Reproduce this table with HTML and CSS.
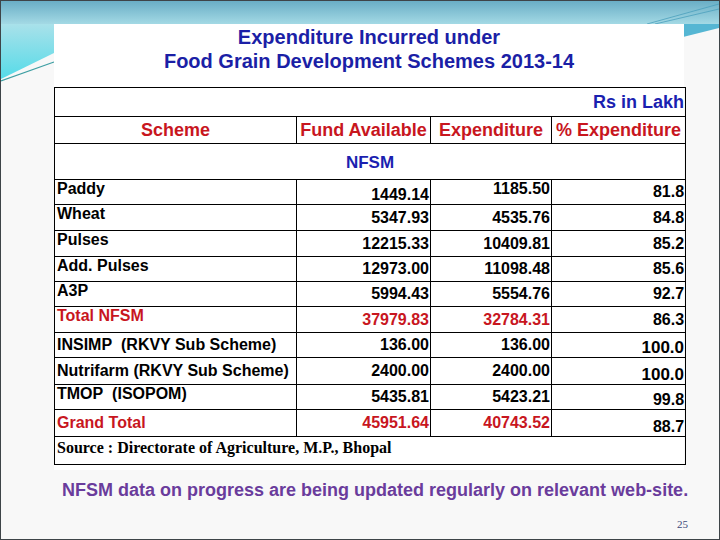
FILE: index.html
```html
<!DOCTYPE html>
<html>
<head>
<meta charset="utf-8">
<link rel="stylesheet" href="styles.css">
</head>
<body>
<div class="slide">
  <svg class="decor" width="718" height="538" viewBox="0 0 718 538">
    <defs>
      <linearGradient id="band" x1="0" y1="0" x2="0" y2="1">
        <stop offset="0" stop-color="#6aaec6"/>
        <stop offset="1" stop-color="#a6dbe6"/>
      </linearGradient>
      <linearGradient id="wedge" x1="0" y1="0" x2="0" y2="1">
        <stop offset="0" stop-color="#a9e1ea"/>
        <stop offset="1" stop-color="#55dbe8"/>
      </linearGradient>
    </defs>
    <rect x="0" y="0" width="718" height="24" fill="url(#band)"/>
    <path d="M0,23 L53,23 L53,52 L0,78 Z" fill="url(#wedge)"/>
    <path d="M0,80 L53,61" stroke="#3f9fa3" stroke-width="1.2" fill="none"/>
    <path d="M682,23 L718,23 L718,27 L682,36 Z" fill="#55b6d3"/>
    <path d="M646,23 L718,3" stroke="#4b9fbd" stroke-width="0.8" fill="none"/>
    <path d="M654,23 L718,8" stroke="#4b9fbd" stroke-width="0.8" fill="none"/>
  </svg>
  <div class="panel">
    <h1 class="title">Expenditure Incurred under<br>Food Grain Development Schemes 2013-14</h1>
    <table class="data">
      <colgroup>
        <col class="c1"><col class="c2"><col class="c3"><col class="c4">
      </colgroup>
      <tr class="r-rs"><td colspan="4" class="rs">Rs in Lakh</td></tr>
      <tr class="r-hdr">
        <td class="hdr">Scheme</td>
        <td class="hdr">Fund Available</td>
        <td class="hdr">Expenditure</td>
        <td class="hdr">% Expenditure</td>
      </tr>
      <tr class="r-nfsm"><td colspan="4" class="nfsm">NFSM</td></tr>
      <tr class="r24"><td class="lbl">Paddy</td><td class="num bot">1449.14</td><td class="num top">1185.50</td><td class="num">81.8</td></tr>
      <tr class="r25"><td class="lbl">Wheat</td><td class="num">5347.93</td><td class="num">4535.76</td><td class="num">84.8</td></tr>
      <tr class="r25"><td class="lbl">Pulses</td><td class="num">12215.33</td><td class="num">10409.81</td><td class="num">85.2</td></tr>
      <tr class="r24"><td class="lbl">Add. Pulses</td><td class="num">12973.00</td><td class="num">11098.48</td><td class="num">85.6</td></tr>
      <tr class="r24"><td class="lbl">A3P</td><td class="num">5994.43</td><td class="num">5554.76</td><td class="num">92.7</td></tr>
      <tr class="r25"><td class="lbl red">Total NFSM</td><td class="num red">37979.83</td><td class="num red">32784.31</td><td class="num">86.3</td></tr>
      <tr class="r24"><td class="lbl mid">INSIMP&nbsp; (RKVY Sub Scheme)</td><td class="num">136.00</td><td class="num">136.00</td><td class="num big bot">100.0</td></tr>
      <tr class="r26"><td class="lbl mid">Nutrifarm (RKVY Sub Scheme)</td><td class="num">2400.00</td><td class="num">2400.00</td><td class="num big bot">100.0</td></tr>
      <tr class="r24"><td class="lbl">TMOP&nbsp; (ISOPOM)</td><td class="num">5435.81</td><td class="num">5423.21</td><td class="num bot">99.8</td></tr>
      <tr class="r26"><td class="lbl red mid">Grand Total</td><td class="num red">45951.64</td><td class="num red">40743.52</td><td class="num bot">88.7</td></tr>
      <tr class="r-src"><td colspan="4" class="src">Source : Directorate of Agriculture, M.P., Bhopal</td></tr>
    </table>
  </div>
  <p class="note">NFSM data on progress are being updated regularly on relevant web-site.</p>
  <div class="pgnum">25</div>
</div>
</body>
</html>
```
FILE: styles.css
```css
html, body {
  margin: 0;
  padding: 0;
  background: #ffffff;
}

.slide {
  position: relative;
  width: 720px;
  height: 540px;
  box-sizing: border-box;
  border: 1px solid #3e4448;
  background: #f8f8f8;
  overflow: hidden;
  font-family: "Liberation Sans", Arial, sans-serif;
}

.decor {
  position: absolute;
  left: 0;
  top: 0;
  z-index: 0;
}

.panel {
  position: relative;
  z-index: 1;
  margin: 23px 0 0 53px;
  width: 630px;
  height: 446px;
  background: #ffffff;
  padding-top: 1px;
  box-sizing: border-box;
}

.title {
  margin: 0;
  font-size: 20px;
  line-height: 24px;
  font-weight: bold;
  color: #1b1fa6;
  text-align: center;
}

.data {
  margin-top: 14px;
  width: 631px;
  table-layout: fixed;
  border-collapse: collapse;
  border: 1px solid #000;
}

.c1 { width: 242px; }
.c2 { width: 134px; }
.c3 { width: 121px; }
.c4 { width: 134px; }

.data td {
  border: 1px solid #000;
  padding: 0 2px;
  font-size: 16px;
  font-weight: bold;
  color: #000;
  white-space: nowrap;
  line-height: 18px;
}

.r-rs td { height: 28px; }
.r-hdr td { height: 26px; }
.r-nfsm td { height: 33px; }
.r24 td { height: 24px; }
.r25 td { height: 25px; }
.r26 td { height: 26px; }
.r-src td { height: 25px; }

.rs {
  text-align: right;
  font-size: 18px !important;
  color: #1b1fb0 !important;
  padding-right: 1px !important;
  vertical-align: middle;
}

.hdr {
  text-align: center;
  font-size: 18px !important;
  color: #c8161e !important;
  vertical-align: middle;
}

.nfsm {
  text-align: center;
  font-size: 17px !important;
  color: #1b1fb0 !important;
  vertical-align: middle;
  padding-top: 2px !important;
}

.lbl {
  text-align: left;
  vertical-align: top;
  padding-top: 0 !important;
}

.lbl.mid {
  vertical-align: middle;
}

.num {
  text-align: right;
  vertical-align: middle;
  padding-right: 1px !important;
}

.num.bot { vertical-align: bottom; }
.num.top { vertical-align: top; }
.num.big { font-size: 17px !important; }

.red { color: #c8161e !important; }

.src {
  font-family: "Liberation Serif", "Times New Roman", serif;
  font-size: 16px !important;
  text-align: left;
  vertical-align: top;
  padding-top: 2px !important;
}

.note {
  position: relative;
  z-index: 1;
  margin: 9px 0 0 61px;
  font-size: 18px;
  font-weight: bold;
  color: #6a3c9c;
  line-height: 22px;
}

.pgnum {
  position: relative;
  z-index: 1;
  margin: 17px 0 0 676px;
  font-family: "Liberation Serif", "Times New Roman", serif;
  font-size: 11px;
  line-height: 12px;
  color: #3b4a78;
}
```
